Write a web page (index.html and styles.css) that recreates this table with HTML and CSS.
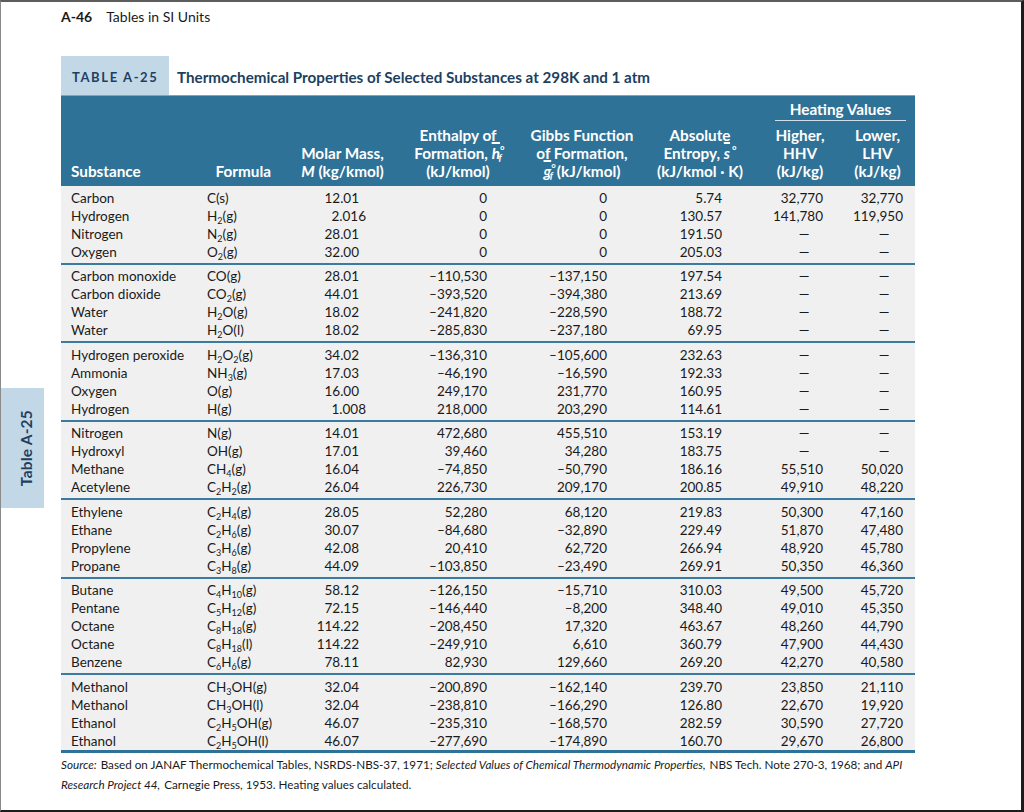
FILE: index.html
```html
<!DOCTYPE html>
<html lang="en">
<head>
<meta charset="utf-8">
<title>Table A-25</title>
<link rel="stylesheet" href="styles.css">
</head>
<body>
<div class="page">
  <aside class="side">
    <div class="thumb"><span class="thumb-text">Table A-25</span></div>
  </aside>
  <main class="main">
    <header class="running"><b class="folio">A-46</b><span class="running-title">Tables in SI Units</span></header>

    <div class="caption">
      <div class="tag">TABLE A-25</div>
      <h1 class="title">Thermochemical Properties of Selected Substances at 298K and 1 atm</h1>
    </div>

    <div class="thead">
      <div class="th th-sub">Substance</div>
      <div class="th th-form">Formula</div>
      <div class="th th-molar">Molar Mass,<br><i>M</i> (kg/kmol)</div>
      <div class="th th-enth">Enthalpy of<br>Formation, <i class="bar">h</i><sup class="deg">°</sup><sub class="f">f</sub><br>(kJ/kmol)</div>
      <div class="th th-gibbs">Gibbs Function<br>of Formation,<br><i class="bar">g</i><sup class="deg">°</sup><sub class="f">f</sub> (kJ/kmol)</div>
      <div class="th th-ent">Absolute<br>Entropy, <i class="bar">s</i><sup class="deg2">°</sup><br>(kJ/kmol · K)</div>
      <div class="th th-heat"><span class="heat-label">Heating Values</span></div>
      <div class="th th-hhv">Higher,<br>HHV<br>(kJ/kg)</div>
      <div class="th th-lhv">Lower,<br>LHV<br>(kJ/kg)</div>
    </div>

    <div class="tbody">
      <div class="grp">
        <span>Carbon</span><span>C(s)</span><span class="n">12.01</span><span class="n">0</span><span class="n">0</span><span class="n">5.74</span><span class="n">32,770</span><span class="n">32,770</span>
        <span>Hydrogen</span><span>H<sub>2</sub>(g)</span><span class="n"><span class="d3">2.016</span></span><span class="n">0</span><span class="n">0</span><span class="n">130.57</span><span class="n">141,780</span><span class="n">119,950</span>
        <span>Nitrogen</span><span>N<sub>2</sub>(g)</span><span class="n">28.01</span><span class="n">0</span><span class="n">0</span><span class="n">191.50</span><span class="n"><span class="dash">—</span></span><span class="n"><span class="dash">—</span></span>
        <span>Oxygen</span><span>O<sub>2</sub>(g)</span><span class="n">32.00</span><span class="n">0</span><span class="n">0</span><span class="n">205.03</span><span class="n"><span class="dash">—</span></span><span class="n"><span class="dash">—</span></span>
      </div>
      <div class="grp">
        <span>Carbon monoxide</span><span>CO(g)</span><span class="n">28.01</span><span class="n">–110,530</span><span class="n">–137,150</span><span class="n">197.54</span><span class="n"><span class="dash">—</span></span><span class="n"><span class="dash">—</span></span>
        <span>Carbon dioxide</span><span>CO<sub>2</sub>(g)</span><span class="n">44.01</span><span class="n">–393,520</span><span class="n">–394,380</span><span class="n">213.69</span><span class="n"><span class="dash">—</span></span><span class="n"><span class="dash">—</span></span>
        <span>Water</span><span>H<sub>2</sub>O(g)</span><span class="n">18.02</span><span class="n">–241,820</span><span class="n">–228,590</span><span class="n">188.72</span><span class="n"><span class="dash">—</span></span><span class="n"><span class="dash">—</span></span>
        <span>Water</span><span>H<sub>2</sub>O(l)</span><span class="n">18.02</span><span class="n">–285,830</span><span class="n">–237,180</span><span class="n">69.95</span><span class="n"><span class="dash">—</span></span><span class="n"><span class="dash">—</span></span>
      </div>
      <div class="grp">
        <span>Hydrogen peroxide</span><span>H<sub>2</sub>O<sub>2</sub>(g)</span><span class="n">34.02</span><span class="n">–136,310</span><span class="n">–105,600</span><span class="n">232.63</span><span class="n"><span class="dash">—</span></span><span class="n"><span class="dash">—</span></span>
        <span>Ammonia</span><span>NH<sub>3</sub>(g)</span><span class="n">17.03</span><span class="n">–46,190</span><span class="n">–16,590</span><span class="n">192.33</span><span class="n"><span class="dash">—</span></span><span class="n"><span class="dash">—</span></span>
        <span>Oxygen</span><span>O(g)</span><span class="n">16.00</span><span class="n">249,170</span><span class="n">231,770</span><span class="n">160.95</span><span class="n"><span class="dash">—</span></span><span class="n"><span class="dash">—</span></span>
        <span>Hydrogen</span><span>H(g)</span><span class="n"><span class="d3">1.008</span></span><span class="n">218,000</span><span class="n">203,290</span><span class="n">114.61</span><span class="n"><span class="dash">—</span></span><span class="n"><span class="dash">—</span></span>
      </div>
      <div class="grp">
        <span>Nitrogen</span><span>N(g)</span><span class="n">14.01</span><span class="n">472,680</span><span class="n">455,510</span><span class="n">153.19</span><span class="n"><span class="dash">—</span></span><span class="n"><span class="dash">—</span></span>
        <span>Hydroxyl</span><span>OH(g)</span><span class="n">17.01</span><span class="n">39,460</span><span class="n">34,280</span><span class="n">183.75</span><span class="n"><span class="dash">—</span></span><span class="n"><span class="dash">—</span></span>
        <span>Methane</span><span>CH<sub>4</sub>(g)</span><span class="n">16.04</span><span class="n">–74,850</span><span class="n">–50,790</span><span class="n">186.16</span><span class="n">55,510</span><span class="n">50,020</span>
        <span>Acetylene</span><span>C<sub>2</sub>H<sub>2</sub>(g)</span><span class="n">26.04</span><span class="n">226,730</span><span class="n">209,170</span><span class="n">200.85</span><span class="n">49,910</span><span class="n">48,220</span>
      </div>
      <div class="grp">
        <span>Ethylene</span><span>C<sub>2</sub>H<sub>4</sub>(g)</span><span class="n">28.05</span><span class="n">52,280</span><span class="n">68,120</span><span class="n">219.83</span><span class="n">50,300</span><span class="n">47,160</span>
        <span>Ethane</span><span>C<sub>2</sub>H<sub>6</sub>(g)</span><span class="n">30.07</span><span class="n">–84,680</span><span class="n">–32,890</span><span class="n">229.49</span><span class="n">51,870</span><span class="n">47,480</span>
        <span>Propylene</span><span>C<sub>3</sub>H<sub>6</sub>(g)</span><span class="n">42.08</span><span class="n">20,410</span><span class="n">62,720</span><span class="n">266.94</span><span class="n">48,920</span><span class="n">45,780</span>
        <span>Propane</span><span>C<sub>3</sub>H<sub>8</sub>(g)</span><span class="n">44.09</span><span class="n">–103,850</span><span class="n">–23,490</span><span class="n">269.91</span><span class="n">50,350</span><span class="n">46,360</span>
      </div>
      <div class="grp">
        <span>Butane</span><span>C<sub>4</sub>H<sub>10</sub>(g)</span><span class="n">58.12</span><span class="n">–126,150</span><span class="n">–15,710</span><span class="n">310.03</span><span class="n">49,500</span><span class="n">45,720</span>
        <span>Pentane</span><span>C<sub>5</sub>H<sub>12</sub>(g)</span><span class="n">72.15</span><span class="n">–146,440</span><span class="n">–8,200</span><span class="n">348.40</span><span class="n">49,010</span><span class="n">45,350</span>
        <span>Octane</span><span>C<sub>8</sub>H<sub>18</sub>(g)</span><span class="n">114.22</span><span class="n">–208,450</span><span class="n">17,320</span><span class="n">463.67</span><span class="n">48,260</span><span class="n">44,790</span>
        <span>Octane</span><span>C<sub>8</sub>H<sub>18</sub>(l)</span><span class="n">114.22</span><span class="n">–249,910</span><span class="n">6,610</span><span class="n">360.79</span><span class="n">47,900</span><span class="n">44,430</span>
        <span>Benzene</span><span>C<sub>6</sub>H<sub>6</sub>(g)</span><span class="n">78.11</span><span class="n">82,930</span><span class="n">129,660</span><span class="n">269.20</span><span class="n">42,270</span><span class="n">40,580</span>
      </div>
      <div class="grp grp-last">
        <span>Methanol</span><span>CH<sub>3</sub>OH(g)</span><span class="n">32.04</span><span class="n">–200,890</span><span class="n">–162,140</span><span class="n">239.70</span><span class="n">23,850</span><span class="n">21,110</span>
        <span>Methanol</span><span>CH<sub>3</sub>OH(l)</span><span class="n">32.04</span><span class="n">–238,810</span><span class="n">–166,290</span><span class="n">126.80</span><span class="n">22,670</span><span class="n">19,920</span>
        <span>Ethanol</span><span>C<sub>2</sub>H<sub>5</sub>OH(g)</span><span class="n">46.07</span><span class="n">–235,310</span><span class="n">–168,570</span><span class="n">282.59</span><span class="n">30,590</span><span class="n">27,720</span>
        <span>Ethanol</span><span>C<sub>2</sub>H<sub>5</sub>OH(l)</span><span class="n">46.07</span><span class="n">–277,690</span><span class="n">–174,890</span><span class="n">160.70</span><span class="n">29,670</span><span class="n">26,800</span>
      </div>
    </div>

    <p class="source"><i>Source:</i> Based on JANAF Thermochemical Tables, NSRDS-NBS-37, 1971; <i>Selected Values of Chemical Thermodynamic Properties,</i> NBS Tech. Note 270-3, 1968; and <i>API Research Project 44,</i> Carnegie Press, 1953. Heating values calculated.</p>
  </main>
</div>
</body>
</html>
```

FILE: styles.css
```css
* { box-sizing: border-box; }

html, body {
  margin: 0;
  padding: 0;
  background: #ffffff;
}

body {
  font-family: Lato, "Open Sans", sans-serif;
  color: #1a1a1a;
}

.page {
  width: 1024px;
  height: 812px;
  border-top: 2px solid #5c5c5c;
  border-left: 1px solid #8a8a8a;
  border-right: 3px solid #1c1c1c;
  border-bottom: 2px solid #1c1c1c;
  display: flex;
  overflow: hidden;
}

.side {
  width: 60px;
  flex: none;
}

.thumb {
  margin-top: 386px;
  width: 43px;
  height: 120px;
  background: #c3d8e7;
  display: flex;
  align-items: center;
  justify-content: flex-end;
  padding-right: 9px;
}

.thumb-text {
  writing-mode: vertical-rl;
  transform: rotate(180deg);
  font-weight: 700;
  font-size: 15.5px;
  color: #1e3f5f;
  letter-spacing: 0.2px;
}

.main {
  width: 854px;
  flex: none;
  display: flex;
  flex-direction: column;
}

.running {
  height: 54px;
  padding-top: 5px;
  font-size: 14px;
  line-height: 20px;
  color: #1a1a1a;
  display: flex;
  gap: 14px;
}

.folio { font-weight: 700; }

.caption {
  display: flex;
  align-items: center;
  height: 39px;
}

.tag {
  width: 108px;
  height: 39px;
  background: #c3d8e7;
  color: #1e3f5f;
  font-weight: 700;
  font-size: 13px;
  letter-spacing: 1.6px;
  display: flex;
  align-items: center;
  padding-left: 11px;
  padding-top: 2px;
}

.title {
  margin: 0 0 0 8px;
  padding-top: 2px;
  font-size: 15.2px;
  font-weight: 700;
  color: #1e3f5f;
}

.thead,
.grp {
  display: grid;
  grid-template-columns: 139px 80px 115px 120px 125px 120px 80px 75px;
}

.thead {
  background: #2f7297;
  border-top: 1px solid #7aa6c2;
  color: #ffffff;
  font-weight: 700;
  font-size: 15.3px;
  line-height: 18px;
  padding: 4px 0 6px;
  grid-template-rows: auto auto;
}

.th {
  grid-row: 1 / 3;
  align-self: end;
  white-space: nowrap;
}

.th-sub { grid-column: 1; padding-left: 10px; }
.th-form { grid-column: 2; text-align: right; padding-right: 9px; }
.th-molar { grid-column: 3; text-align: center; padding-left: 10px; }
.th-enth { grid-column: 4; text-align: center; padding-left: 6px; }
.th-gibbs { grid-column: 5; text-align: center; padding-left: 9px; }
.th-ent { grid-column: 6; text-align: center; }
.th-heat {
  grid-column: 7 / 9;
  grid-row: 1;
  align-self: start;
  padding: 0 9px 0 15px;
}
.heat-label {
  display: block;
  text-align: center;
  border-bottom: 1.5px solid #cfe0ec;
  padding-bottom: 2px;
  margin-bottom: 5px;
}
.th-hhv { grid-column: 7; grid-row: 2; text-align: center; }
.th-lhv { grid-column: 8; grid-row: 2; text-align: center; }

.bar {
  text-decoration: overline;
  text-decoration-thickness: 1.5px;
}

.deg,
.deg2 {
  font-size: 11px;
  vertical-align: 5px;
  line-height: 0;
  font-style: normal;
}

.deg2 { margin-left: 2px; }

.f {
  font-size: 10px;
  vertical-align: -2px;
  line-height: 0;
  margin-left: -6px;
  font-style: italic;
}

.tbody {
  background: #f0f0f0;
  border-bottom: 3px solid #2f7297;
}

.grp {
  padding: 2.5px 0 2px;
  font-size: 13.5px;
  line-height: 18px;
}

.grp + .grp { border-top: 2px solid #3a7ba2; }
.grp-last { padding-bottom: 0; }

.grp > span { white-space: nowrap; }
.grp > span:nth-child(8n+1) { padding-left: 10px; }
.grp > span:nth-child(8n+2) { padding-left: 7px; }
.grp > span:nth-child(8n+3) { text-align: right; padding-right: 36px; }
.grp > span:nth-child(8n+4) { text-align: right; padding-right: 28px; }
.grp > span:nth-child(8n+5) { text-align: right; padding-right: 33px; }
.grp > span:nth-child(8n+6) { text-align: right; padding-right: 38px; }
.grp > span:nth-child(8n+7) { text-align: right; padding-right: 17px; }
.grp > span:nth-child(8n+8) { text-align: right; padding-right: 12px; }

.d3 { margin-right: -7px; }

.dash {
  display: inline-block;
  width: 38px;
  text-align: center;
}

sub {
  font-size: 9px;
  line-height: 0;
  vertical-align: -3px;
}

.source {
  margin: 1px 0 0;
  font-size: 11.7px;
  line-height: 20px;
  color: #1a1a1a;
}

.source i { padding-right: 1px; }
```
